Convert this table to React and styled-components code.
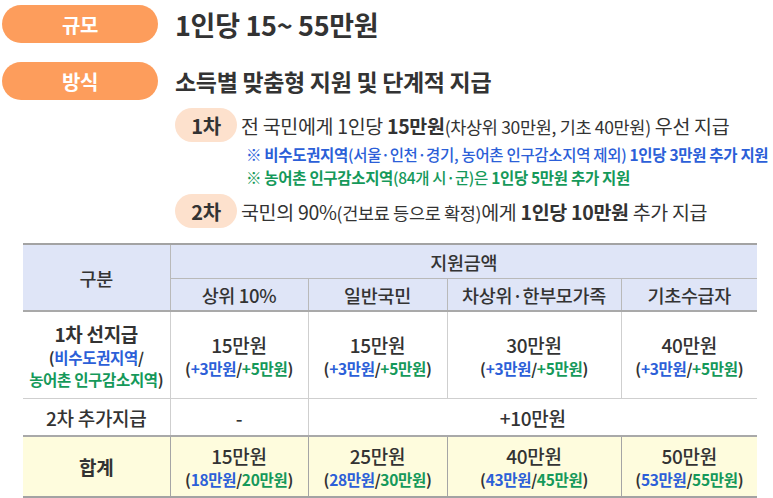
import React from 'react';
import styled, { createGlobalStyle } from 'styled-components';

const GlobalStyle = createGlobalStyle`
  html, body {
    margin: 0;
    padding: 0;
    background: #ffffff;
  }
  body {
    font-family: "Noto Sans CJK KR", "Noto Sans", sans-serif;
    color: #333333;
  }
`;

const Page = styled.div`
  width: 773px;
  height: 498px;
  overflow: hidden;
  padding: 5px 0 0 2px;
  box-sizing: border-box;
  letter-spacing: -0.02em;
`;

const Row = styled.div`
  display: flex;
  align-items: center;
  gap: 17px;
  height: 38px;
  margin-bottom: ${p => p.$mb || 0}px;
`;

const Pill = styled.div`
  width: 156px;
  height: 38px;
  border-radius: 19px;
  background: #fd9d5c;
  color: #ffffff;
  font-weight: 700;
  font-size: 20px;
  display: flex;
  align-items: center;
  justify-content: center;
`;

const Headline = styled.div`
  font-weight: 700;
  font-size: ${p => p.$size}px;
  color: #333333;
`;

const Steps = styled.div`
  padding-left: 173px;
  margin-top: 8px;
  display: flex;
  flex-direction: column;
`;

const StepRow = styled.div`
  display: flex;
  align-items: center;
  gap: 4px;
  height: 34px;
`;

const Badge = styled.div`
  width: 62px;
  height: 34px;
  border-radius: 17px;
  background: #fde1cd;
  font-weight: 700;
  font-size: 20px;
  color: #333;
  display: flex;
  align-items: center;
  justify-content: center;
  flex-shrink: 0;
`;

const StepText = styled.div`
  font-size: 19.5px;
  color: #333;
  white-space: nowrap;
  b { font-weight: 700; }
  span { font-size: 17.5px; }
`;

const Note = styled.div`
  padding-left: 71px;
  font-size: 15.5px;
  font-weight: 500;
  color: ${p => p.$color};
  height: 23px;
  line-height: 23px;
  white-space: nowrap;
  b { font-weight: 700; }
`;

const Notes = styled.div`
  display: flex;
  flex-direction: column;
  margin: 1px 0 5px;
`;

const Table = styled.table`
  margin: 15px 0 0 21px;
  width: 734px;
  border-collapse: collapse;
  table-layout: fixed;
  border-top: 2px solid #a3a3a3;
  border-bottom: 2px solid #a3a3a3;
`;

const Th = styled.th`
  background: #dfe5f7;
  font-weight: 500;
  font-size: 18.5px;
  color: #333;
  height: ${p => p.$h}px;
  padding: 0;
  border-left: ${p => (p.$first ? 'none' : '1px solid #b9b9b9')};
  border-bottom: ${p => (p.$thick ? '2px solid #a9a9a9' : '1px solid #b9b9b9')};
`;

const Td = styled.td`
  background: ${p => (p.$total ? '#fefcdd' : '#ffffff')};
  text-align: center;
  vertical-align: middle;
  height: ${p => p.$h}px;
  padding: 0;
  color: #333;
  border-left: ${p => (p.$first ? 'none' : `1px solid ${p.$total ? '#a5a5a5' : '#cfcfcf'}`)};
  border-top: ${p => (p.$total ? '2px solid #a9a9a9' : '1px solid #cfcfcf')};
`;

const Main = styled.div`
  font-size: 19px;
  font-weight: ${p => (p.$bold ? 700 : 500)};
  line-height: 25px;
`;

const Sub = styled.div`
  font-size: 15.5px;
  font-weight: 700;
  line-height: 22px;
  color: #333;
`;

const Blue = styled.span`
  color: #2c5fd8;
`;

const Green = styled.span`
  color: #15995a;
`;

const Plus = ({ a = '+3만원', b = '+5만원' }) => (
  <Sub>(<Blue>{a}</Blue>/<Green>{b}</Green>)</Sub>
);

const groups = ['상위 10%', '일반국민', '차상위·한부모가족', '기초수급자'];
const first = ['15만원', '15만원', '30만원', '40만원'];
const totals = [
  ['15만원', '18만원', '20만원'],
  ['25만원', '28만원', '30만원'],
  ['40만원', '43만원', '45만원'],
  ['50만원', '53만원', '55만원'],
];

export default function App() {
  return (
    <Page>
      <GlobalStyle />
      <Row $mb={19}>
        <Pill>규모</Pill>
        <Headline $size={27}>1인당 15~ 55만원</Headline>
      </Row>
      <Row>
        <Pill>방식</Pill>
        <Headline $size={23}>소득별 맞춤형 지원 및 단계적 지급</Headline>
      </Row>
      <Steps>
        <StepRow>
          <Badge>1차</Badge>
          <StepText>
            전 국민에게 1인당 <b>15만원</b><span>(차상위 30만원, 기초 40만원)</span> 우선 지급
          </StepText>
        </StepRow>
        <Notes>
          <Note $color="#2c5fd8">
            ※ <b>비수도권지역</b>(서울·인천·경기, 농어촌 인구감소지역 제외) <b>1인당 3만원 추가 지원</b>
          </Note>
          <Note $color="#15995a">
            ※ <b>농어촌 인구감소지역</b>(84개 시·군)은 <b>1인당 5만원 추가 지원</b>
          </Note>
        </Notes>
        <StepRow>
          <Badge>2차</Badge>
          <StepText>
            국민의 90%<span>(건보료 등으로 확정)</span>에게 <b>1인당 10만원</b> 추가 지급
          </StepText>
        </StepRow>
      </Steps>
      <Table>
        <colgroup>
          <col style={{ width: 147 }} />
          <col style={{ width: 138 }} />
          <col style={{ width: 139 }} />
          <col style={{ width: 174 }} />
          <col style={{ width: 136 }} />
        </colgroup>
        <thead>
          <tr>
            <Th $first $thick rowSpan={2} $h={33}>구분</Th>
            <Th colSpan={4} $h={33}>지원금액</Th>
          </tr>
          <tr>
            {groups.map(g => (
              <Th key={g} $thick $h={31}>{g}</Th>
            ))}
          </tr>
        </thead>
        <tbody>
          <tr>
            <Td $first $h={86}>
              <Main $bold>1차 선지급</Main>
              <Sub>(<Blue>비수도권지역</Blue>/</Sub>
              <Sub><Green>농어촌 인구감소지역</Green>)</Sub>
            </Td>
            {first.map((v, i) => (
              <Td key={i} $h={86}>
                <Main>{v}</Main>
                <Plus />
              </Td>
            ))}
          </tr>
          <tr>
            <Td $first $h={36}><Main>2차 추가지급</Main></Td>
            <Td $h={36}><Main>-</Main></Td>
            <Td colSpan={3} $h={36}><Main>+10만원</Main></Td>
          </tr>
          <tr>
            <Td $first $total $h={59}><Main $bold>합계</Main></Td>
            {totals.map(([m, a, b]) => (
              <Td key={m} $total $h={59}>
                <Main>{m}</Main>
                <Plus a={a} b={b} />
              </Td>
            ))}
          </tr>
        </tbody>
      </Table>
    </Page>
  );
}
